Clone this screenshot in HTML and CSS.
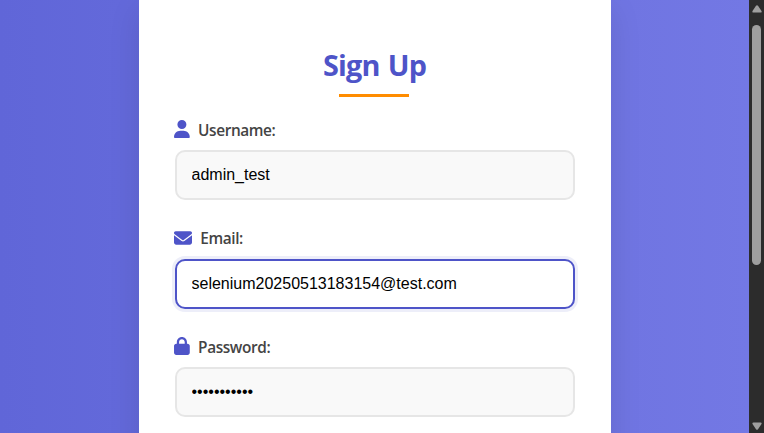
FILE: index.html
```
<!DOCTYPE html>
<html lang="en">
<head>
<meta charset="utf-8">
<title>Sign Up</title>
<link rel="stylesheet" href="styles.css">
</head>
<body>
<main class="page">
  <form class="card">
    <h1 class="title">Sign Up</h1>
    <div class="field">
      <label class="label" for="username"><svg class="icon" viewBox="0 0 448 512"><path d="M224 256A128 128 0 1 0 224 0a128 128 0 1 0 0 256zm-45.7 48C79.8 304 0 383.8 0 482.3C0 498.7 13.3 512 29.7 512H418.3c16.4 0 29.7-13.3 29.7-29.7C448 383.800 368.200 304 269.700 304H178.300z"/></svg><span class="name">Username:</span></label>
      <input class="input" id="username" type="text" value="admin_test">
    </div>
    <div class="field">
      <label class="label" for="email"><svg class="icon icon-wide" viewBox="0 0 512 512"><path d="M48 64C21.500 64 0 85.500 0 112c0 15.100 7.100 29.300 19.200 38.400L236.800 313.600c11.400 8.500 27 8.500 38.400 0L492.800 150.400c12.100-9.100 19.200-23.300 19.200-38.400c0-26.500-21.500-48-48-48H48zM0 176V384c0 35.300 28.700 64 64 64H448c35.300 0 64-28.700 64-64V176L294.400 339.200c-22.800 17.100-54 17.100-76.800 0L0 176z"/></svg><span class="name">Email:</span></label>
      <input class="input input-active" id="email" type="text" value="selenium20250513183154@test.com">
    </div>
    <div class="field">
      <label class="label" for="password"><svg class="icon" viewBox="0 0 448 512"><path d="M144 144v48H304V144c0-44.200-35.800-80-80-80s-80 35.800-80 80zM80 192V144C80 64.500 144.500 0 224 0s144 64.500 144 144v48h16c35.300 0 64 28.700 64 64V448c0 35.300-28.700 64-64 64H64c-35.300 0-64-28.700-64-64V256c0-35.300 28.700-64 64-64H80z"/></svg><span class="name">Password:</span></label>
      <input class="input" id="password" type="password" value="selenium123">
    </div>
  </form>
</main>
<div class="scrollbar" aria-hidden="true">
  <svg class="arrow" viewBox="0 0 10 8"><path d="M4 .8Q5-.5 6 .8L9.500 6Q10 7.500 8.500 7.500H1.500Q0 7.500.5 6z"/></svg>
  <div class="thumb"></div>
  <svg class="arrow arrow-down" viewBox="0 0 10 8"><path d="M4 .8Q5-.5 6 .8L9.500 6Q10 7.500 8.500 7.500H1.500Q0 7.500.5 6z"/></svg>
</div>
</body>
</html>
```
FILE: styles.css
```
* { box-sizing: border-box; }
body {
  margin: 0;
  height: 433px;
  display: flex;
  overflow: hidden;
  font-family: "Open Sans", "Noto Sans", sans-serif;
}
.page {
  flex: 1;
  height: 433px;
  overflow: hidden;
  display: flex;
  justify-content: center;
  background: linear-gradient(to right, #6066d8, #7378e4);
}
.card {
  width: 472px;
  height: 600px;
  padding: 45px 36px 0;
  background: #fff;
  box-shadow: 0 10px 30px rgba(0, 0, 0, 0.1);
}
.title {
  margin: 0 0 20px;
  height: 52px;
  color: #4e54c8;
  font-size: 28.8px;
  line-height: 40px;
  font-weight: 700;
  letter-spacing: -0.8px;
  word-spacing: 1.5px;
  text-align: center;
}
.title::after {
  content: "";
  display: block;
  width: 70px;
  height: 3px;
  margin: 9px 0 0 164px;
  background: #ff8c00;
}
.field { height: 108.7px; }
.label {
  display: flex;
  align-items: center;
  height: 24px;
  margin: 0 0 9px -0.4px;
  gap: 8.2px;
  color: #444;
  font-size: 15.4px;
  font-weight: 600;
  letter-spacing: -0.4px;
}
.name { padding-top: 2px; }
.icon {
  width: 15.8px;
  height: 18px;
  fill: #4e54c8;
}
.icon-wide { width: 18px; }
.input {
  display: block;
  width: 400px;
  height: 50px;
  padding: 0 15px;
  border: 2px solid #e6e6e6;
  border-radius: 10px;
  outline: none;
  background: #f9f9f9;
  color: #000;
  font: 16px "Liberation Sans", Arial, sans-serif;
}
.input-active {
  border-color: #4e54c8;
  background: #fff;
  box-shadow: 0 0 0 3px rgba(78, 84, 200, 0.1);
}
.scrollbar {
  width: 15px;
  height: 433px;
  padding: 5px 0 3px;
  display: flex;
  flex-direction: column;
  align-items: center;
  background: #2c2c2c;
}
.arrow { width: 10px; height: 8px; fill: #9f9f9f; }
.arrow-down { margin-top: auto; transform: rotate(180deg); }
.thumb {
  width: 9px;
  height: 240px;
  margin-top: 12px;
  border-radius: 5px;
  background: #9f9f9f;
}
```
